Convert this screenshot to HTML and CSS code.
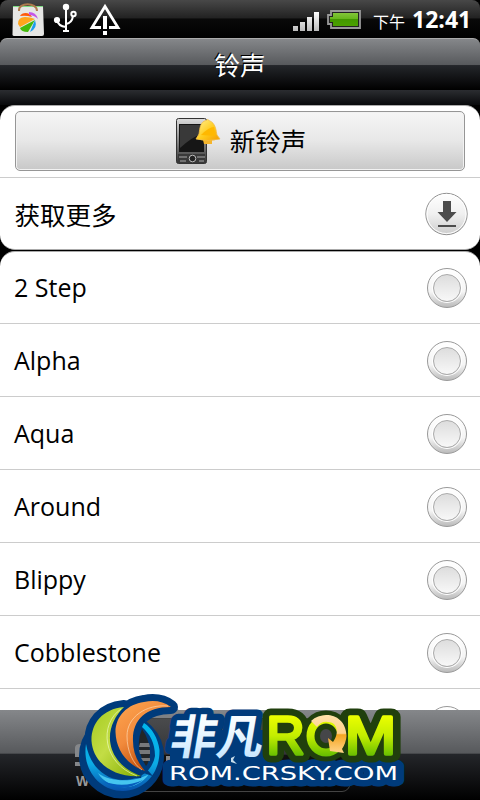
FILE: index.html
```html
<!DOCTYPE html>
<html lang="zh-CN">
<head>
<meta charset="utf-8">
<title>铃声</title>
<link rel="stylesheet" href="styles.css">
</head>
<body>
<main class="phone">
  <div class="status">
    <svg class="status-left" width="130" height="38" viewBox="0 0 130 38">
      <path d="M13 6H43L44 34Q44 36 42 36H15Q12 36 12.500 34Z" fill="#e6e6e4"/>
      <path d="M13 6.500H43" stroke="#7ddc82"/>
      <path d="M19 11C18 2 37 2 37 11" fill="none" stroke="#ad7b4d" stroke-width="2"/>
      <path d="M20 16C22 12 30 12 32 17Q26 15 20 16Z" fill="#ff5a0a"/>
      <path d="M29 12Q36 12 38 19Q34 15 29 15Z" fill="#c456e8"/>
      <path d="M18 24Q18 17 25 17Q30 17 35 19L20 27Z" fill="#ffa51c"/>
      <path d="M20 28L35 20L28 32Q21 32 20 28Z" fill="#45ba0b"/>
      <path d="M35 20Q38 28 30 32Z" fill="#1b9ded"/>
      <g fill="none" stroke="#fff" stroke-width="2"><path d="M66 7V31M63 31H69M57 20Q58 26 66 27M66 24Q72 23 73 16"/><circle cx="73.500" cy="14" r="2.200"/></g>
      <circle cx="66" cy="7" r="3.200" fill="#fff"/><circle cx="57" cy="20" r="3.100" fill="#fff"/>
      <path d="M101 27.500H92L105 6.500L118 27.500H109" fill="none" stroke="#fff" stroke-width="2.800"/>
      <path d="M103 16H107V29H103ZM103 31H107V35H103Z" fill="#fff"/>
    </svg>
    <div class="status-right">
      <svg width="70" height="38" viewBox="292 0 70 38">
        <defs>
          <linearGradient id="sig" x2="0" y2="1"><stop stop-color="#fff"/><stop offset="1" stop-color="#bbb"/></linearGradient>
          <linearGradient id="bat" x2="0" y2="1"><stop stop-color="#83c63a"/><stop offset=".48" stop-color="#65b51b"/><stop offset=".5" stop-color="#439800"/><stop offset="1" stop-color="#4ba100"/></linearGradient>
        </defs>
        <path d="M293 26h5v5h-5zM300 22h5v9h-5zM307 17h5v14h-5zM314 12h5v19h-5z" fill="url(#sig)"/>
        <path d="M331 11H360V28H331V24H328V15H331Z" fill="#222" stroke="#999" stroke-width="1.800"/>
        <path d="M333 13H358V26H333V22H330V17H333Z" fill="url(#bat)"/>
      </svg>
      <span class="ampm">下午</span><span class="time">12:41</span>
    </div>
  </div>
  <header class="title">铃声</header>
  <div class="gap"></div>
  <section class="card card-top">
    <div class="row-button">
      <button class="new">
        <svg width="46" height="48" viewBox="175 116 46 48">
          <defs>
            <linearGradient id="ph" x2="0" y2="1"><stop stop-color="#ddd"/><stop offset=".5" stop-color="#888"/><stop offset="1" stop-color="#333"/></linearGradient>
            <linearGradient id="bell" x2="1" y2="1"><stop stop-color="#fff29a"/><stop offset=".55" stop-color="#ffcb1b"/><stop offset="1" stop-color="#f49b00"/></linearGradient>
          </defs>
          <rect x="176.500" y="117.500" width="30" height="45" rx="2" fill="url(#ph)" stroke="#333"/>
          <rect x="179" y="123" width="25" height="28" fill="#161616"/>
          <path d="M180 124H203V132Q192 136 180 147Z" fill="#393939"/>
          <path d="M178 153H205V162H178Z" fill="#393939"/>
          <path d="M179 156H187M197 156H205M180 160H186M199 160H204" stroke="#aaa"/>
          <circle cx="192.500" cy="157.500" r="3.300" fill="#222" stroke="#bbb"/>
          <path d="M203 139H212V143H204Z" fill="#f5b52c"/>
          <path d="M206 119.500Q208 117.500 209 119.500C216 122 216 130 217 134L220 138Q208 141 196 138L199 133C200 127 200 121 206 119.500Z" fill="url(#bell)" stroke="#f3bd48" stroke-width=".8"/>
          <path d="M201 134Q209 126 214 126Q215 131 215 135Z" fill="#ffb800"/>
        </svg>
        <span>新铃声</span>
      </button>
    </div>
    <div class="row more"><span>获取更多</span>
      <svg width="44" height="44" viewBox="0 0 44 44">
        <defs><linearGradient id="dl" x2="0" y2="1"><stop stop-color="#fff"/><stop offset=".5" stop-color="#f0f0f0"/><stop offset="1" stop-color="#ccc"/></linearGradient></defs>
        <circle cx="21.500" cy="22" r="20.700" fill="url(#dl)" stroke="#929292"/>
        <circle cx="21.500" cy="22" r="19.500" fill="none" stroke="#fff"/>
        <path d="M18 9H26V20H31.500L22 30L12.500 20H18ZM13 33H31V35H13Z" fill="#4c4c4c"/>
      </svg>
    </div>
  </section>
  <section class="card list">
    <div class="row"><span>2 Step</span><i class="radio"></i></div>
    <div class="row"><span>Alpha</span><i class="radio"></i></div>
    <div class="row"><span>Aqua</span><i class="radio"></i></div>
    <div class="row"><span>Around</span><i class="radio"></i></div>
    <div class="row"><span>Blippy</span><i class="radio"></i></div>
    <div class="row"><span>Cobblestone</span><i class="radio"></i></div>
    <div class="row"><span></span><i class="radio"></i></div>
  </section>
  <footer class="bottom"></footer>
  <svg class="logo" width="360" height="120" viewBox="60 680 360 120">
    <defs>
      <linearGradient id="btn" x2="0" y2="1"><stop stop-color="#4a4b4d"/><stop offset=".49" stop-color="#343537"/><stop offset=".5" stop-color="#111"/><stop offset="1" stop-color="#050505"/></linearGradient>
      <linearGradient id="lime" x2="1" y2="1"><stop stop-color="#a4cb21"/><stop offset=".45" stop-color="#c3dd45"/><stop offset="1" stop-color="#82ac00"/></linearGradient>
      <linearGradient id="orange" x2=".6" y2="1"><stop stop-color="#ffa650"/><stop offset=".5" stop-color="#f18a3c"/><stop offset="1" stop-color="#b84300"/></linearGradient>
      <linearGradient id="cyan" x2="0" y2="1"><stop stop-color="#00b7ee"/><stop offset=".6" stop-color="#0cabe5"/><stop offset="1" stop-color="#0751ad"/></linearGradient>
      <linearGradient id="ice" x2="0" y2="1"><stop stop-color="#fff"/><stop offset=".4" stop-color="#f4fbff"/><stop offset="1" stop-color="#b8e0ff"/></linearGradient>
      <linearGradient id="green" gradientUnits="userSpaceOnUse" x1="0" y1="715" x2="0" y2="757"><stop stop-color="#edff00"/><stop offset=".5" stop-color="#c3ed00"/><stop offset="1" stop-color="#62bc00"/></linearGradient>
      <linearGradient id="arrow" x2="0" y2="1"><stop stop-color="#ffe1aa"/><stop offset=".48" stop-color="#ffd18a"/><stop offset=".52" stop-color="#f6a51f"/><stop offset="1" stop-color="#ffd48a"/></linearGradient>
      <path id="green-arc" d="M124 707C102 709 91 724 91.500 741C93 763 114 778 141 776C124 770 113 758 110.500 744C108 730 114 717 124 707Z"/>
      <path id="orange-arc" d="M171 707C163 701 154 700 144 702C128 704 115.500 716 115.500 732C116 750 127 765 145 771C137 762 133 752 133 741C132 721 145 707 171 707Z"/>
    </defs>
    <rect x="130" y="718.500" width="220" height="73" rx="8" fill="url(#btn)" stroke="#444"/>
    <path d="M75 748Q75 744 80 744H90V749H81V757H75ZM75 762H90V766H75ZM166 756H170V761H166Z" fill="#85878a"/>
    <text x="76" y="786" class="ghost">W</text>
    <g class="emblem-outline"><circle cx="121.500" cy="756" r="41"/><use href="#green-arc"/><use href="#orange-arc"/></g>
    <path d="M142 729Q150 740 150 755Q149 763 146 766Q134 747 142 729Z" fill="#222527"/>
    <path d="M140 743H149L150 747H139ZM139 750H150V754H140ZM141 758H150V761H143Z" fill="#77797b"/>
    <path d="M86 744C82 769 99 791 123 791C146 790 160 772 159.500 750C158 738 152 728 144 723L142 727C150 734 155 743 155 756C152 772 139 780 122 780C104 779 90 766 86 744Z" fill="url(#cyan)"/>
    <path d="M98 773C110 782 134 783 149 774C139 788 123 790 110 784Q101 779 98 773Z" fill="#45c5ef"/>
    <path d="M103 781Q123 789 143 780Q123 795 103 781Z" fill="#075dbd"/>
    <use href="#green-arc" stroke="#003b7b" stroke-width="4"/><use href="#green-arc" fill="url(#lime)"/>
    <path d="M121 709C99 724 102 763 137 776" fill="none" stroke="#f3ffd2" stroke-width=".6"/>
    <use href="#orange-arc" stroke="#003b7b" stroke-width="5"/><use href="#orange-arc" fill="url(#orange)"/>
    <path d="M168 706C146 704 127 717 127 736C127 751 133 764 142 770" fill="none" stroke="#ffe4c5" stroke-width=".6"/>
    <path d="M170 730H265V774H170Z" fill="#003b7b"/>
    <g transform="matrix(1 0 -.17 1 128 0)"><text x="168.500" y="754" textLength="93" lengthAdjust="spacingAndGlyphs" class="brand brand-outline">非凡</text></g>
    <text x="169" y="780" textLength="229" lengthAdjust="spacingAndGlyphs" class="site site-outline">ROM.CRSKY.COM</text>
    <g transform="matrix(1 0 -.17 1 128 0)"><text x="168.500" y="754" textLength="93" lengthAdjust="spacingAndGlyphs" class="brand">非凡</text></g>
    <path d="M231 758L235 756L233 760L237 764L231 762Z" fill="#c8ddea"/>
    <g class="rom-outline"><text x="266.500" y="754" textLength="38" lengthAdjust="spacingAndGlyphs">R</text><circle cx="326" cy="736" r="17"/><text x="345" y="754" textLength="51" lengthAdjust="spacingAndGlyphs">M</text></g>
    <g class="rom"><text x="266.500" y="754" textLength="38" lengthAdjust="spacingAndGlyphs">R</text><text x="345" y="754" textLength="51" lengthAdjust="spacingAndGlyphs">M</text></g>
    <ellipse cx="326" cy="736" rx="15.500" ry="16.500" fill="#203f0d" stroke="url(#green)" stroke-width="8"/>
    <ellipse cx="326" cy="736" rx="6" ry="7" fill="#454649"/>
    <path d="M311 721C323 710 346 714 346.500 736Q346 743 342 749L344 753L330 751L328 738L333 742C340 733 337 722 328 722Q321 721 317 727Z" fill="url(#arrow)"/>
    <text x="169" y="780" textLength="229" lengthAdjust="spacingAndGlyphs" class="site">ROM.CRSKY.COM</text>
  </svg>
</main>
</body>
</html>
```

FILE: styles.css
```css
*, *::before { box-sizing: border-box; }
body { margin: 0; background: #000; }
.phone {
  position: relative;
  width: 480px;
  height: 800px;
  overflow: hidden;
  display: flex;
  flex-direction: column;
  background: #000;
  font-family: "Open Sans", "Noto Sans CJK SC", sans-serif;
  color: #000;
}
.status {
  height: 38px;
  flex: none;
  display: flex;
  justify-content: space-between;
  border-radius: 8px 8px 0 0;
  background: linear-gradient(#484848, #222 47%, #090909 50%, #000);
}
.status svg { display: block; }
.status-right { display: flex; width: 188px; color: #fff; }
.ampm { font: 16px/38px "Noto Sans CJK SC", sans-serif; margin: 2px 0 0 11px; white-space: nowrap; }
.time { font: bold 23px/38px "Open Sans", sans-serif; margin: 0 0 0 7px; white-space: nowrap; }
.title {
  height: 52px;
  flex: none;
  border-radius: 7px 7px 0 0;
  border-top: 1px solid #aaa;
  background: linear-gradient(#85878a, #57595c 51%, #24262a 52%, #000);
  color: #fff;
  text-align: center;
  font: 25.5px/50px "Noto Sans CJK SC", sans-serif;
  text-shadow: -1px -1px #000;
}
.gap { height: 15px; flex: none; background: linear-gradient(#2b2d31, #08090b); }
.card { flex: none; background: #fff; border-top: 1px solid #aaa; }
.card-top { height: 145px; border-radius: 15px; border-bottom: 1px solid #aaa; overflow: hidden; }
.row-button { height: 72px; padding: 5px 15px; border-bottom: 1px solid #ccc; }
.new {
  display: flex;
  align-items: center;
  justify-content: center;
  gap: 9px;
  width: 450px;
  height: 60px;
  margin: 0;
  padding: 0 0 0 1px;
  border: 1px solid #969696;
  border-radius: 5px;
  background: linear-gradient(#f6f6f6, #e7e7e7 50%, #c8c8c8);
  box-shadow: inset 0 0 0 1px #f2f2f2;
  font: 25.5px/58px "Noto Sans CJK SC", sans-serif;
  color: #000;
}
.new span { margin-top: -2px; }
.row {
  height: 73px;
  padding: 1px 13px 0 14px;
  display: flex;
  align-items: center;
  justify-content: space-between;
  border-bottom: 1px solid #ccc;
  font-size: 25px;
  line-height: 34px;
}
.more { height: 71px; border: 0; padding: 0 11px 0 14.5px; font: 25.5px/70px "Noto Sans CJK SC", sans-serif; }
.list { height: 459px; margin-top: 1px; border-radius: 15px 15px 0 0; overflow: hidden; }
.list .row span { margin-top: -2px; }
.list .row:first-child { height: 72px; padding-top: 0; }
.list .row:first-child span { margin-top: -1px; }
.radio {
  width: 40px;
  height: 40px;
  border: 1px solid #999;
  border-radius: 50%;
  background: linear-gradient(#fff, #f5f5f5 60%, #bbb);
  padding: 5px;
}
.radio::before {
  content: "";
  display: block;
  width: 28px;
  height: 28px;
  border: 1px solid #aaa;
  border-radius: 50%;
  background: linear-gradient(#ddd, #f8f8f8);
  box-shadow: 0 0 0 1px #fff;
}
.bottom { height: 90px; flex: none; background: linear-gradient(#85878a, #57595c 48%, #24262a 49%, #000); }
.logo { position: absolute; left: 60px; top: 680px; }
.ghost { font: bold 14px "Liberation Sans", sans-serif; fill: #999; }
.emblem-outline { fill: #003b7b; stroke: #003b7b; stroke-width: 14px; stroke-linejoin: round; }
.emblem-outline circle { stroke-width: 3px; }
.brand { font: 700 47px "Noto Sans CJK SC", sans-serif; fill: url(#ice); }
.brand-outline, .site-outline { fill: #003b7b; stroke: #003b7b; stroke-width: 13px; stroke-linejoin: round; }
.rom-outline text, .rom text { font: 54px "Liberation Sans", sans-serif; stroke-linejoin: round; }
.rom-outline { fill: #203f0d; stroke: #203f0d; stroke-width: 17px; stroke-linejoin: round; }
.rom { fill: url(#green); stroke: url(#green); stroke-width: 3.5px; }
.site { font: 20px "DejaVu Sans", sans-serif; }
.site:not(.site-outline) { fill: #fff; }
```
